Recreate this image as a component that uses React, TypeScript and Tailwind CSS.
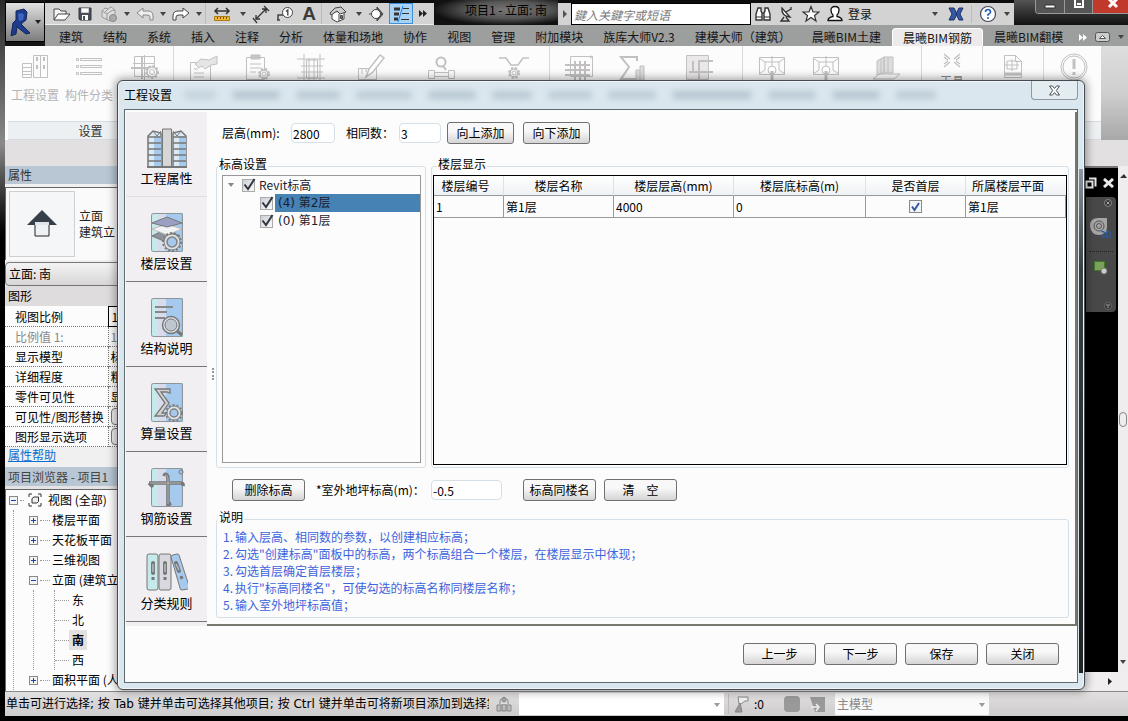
import { useState } from 'react';
import type { ReactNode } from 'react';

type IconProps = { children: ReactNode; w?: number; h?: number; box?: string; className?: string };

const Svg = ({ children, w = 20, h = 20, box, className = '' }: IconProps) => (
  <svg
    width={w}
    height={h}
    viewBox={box ?? `0 0 ${w} ${h}`}
    fill="none"
    stroke="currentColor"
    aria-hidden="true"
    className={`shrink-0 ${className}`}
  >
    {children}
  </svg>
);

const Caret = ({ className = 'text-[#444]' }: { className?: string }) => (
  <Svg w={6} h={4} className={className}>
    <path d="M0 0h6L3 4z" fill="currentColor" stroke="none" />
  </Svg>
);

/* ---------- Quick access toolbar ---------- */

const OpenIcon = () => (
  <Svg>
    <path d="M3 16V5h5l2 2h5v3" fill="#f4f4f4" stroke="#444" />
    <path d="M3 16l4-6h12l-5 6z" fill="#fff" stroke="#444" />
  </Svg>
);
const SaveIcon = () => (
  <Svg>
    <path d="M4 4h12v12H5l-1-1z" fill="#4a4f58" stroke="#333a44" />
    <path d="M6.500 4.500h7v4h-7z" fill="#fff" stroke="#ccc" />
    <path d="M7 11h6v5H7z" fill="#fff" stroke="none" />
    <path d="M8 12h2v4H8z" fill="#4a4f58" stroke="none" />
  </Svg>
);
const SyncIcon = () => (
  <Svg className="text-[#999]">
    <path d="M3 7l3-3 3 1 3-2 4 3v7l-5 4-8-4z" fill="#ddd" />
    <path d="M3 7l5 3 4-3 4-1M8 10v6M9 5L6 8" />
    <circle cx="14" cy="14" r="3.500" fill="#aaa" stroke="#888" />
  </Svg>
);
const UndoIcon = () => (
  <Svg className="text-[#888]">
    <path d="M2 9l6-5v3h5q5 0 5 5v4h-3v-3q0-2-3-2H8v3z" fill="#eee" />
  </Svg>
);
const RedoIcon = () => (
  <Svg className="text-[#444]">
    <path d="M18 9l-6-5v3H7q-5 0-5 5v4h3v-3q0-2 3-2h4v3z" fill="#fff" />
  </Svg>
);
const MeasureIcon = () => (
  <Svg>
    <path d="M3 7h14M6 4L3 7l3 3M14 4l3 3-3 3" stroke="#333" strokeWidth="1.500" />
    <path d="M2.500 12.500h15v4h-15z" fill="#f0b93a" stroke="#b07a10" />
    <path d="M5.500 13v2M8.500 13v2M11.500 13v2M14.500 13v2" stroke="#7a5200" />
  </Svg>
);
const AlignIcon = () => (
  <Svg className="text-[#333]">
    <path d="M5 15L15 5M5 11v4h4M11 5h4v4M2 14l4 5M13 2l5 5" strokeWidth="1.300" />
  </Svg>
);
const TagIcon = () => (
  <Svg className="text-[#444]">
    <path d="M3 16v-5h5M2 16h3" strokeWidth="1.500" />
    <circle cx="12.500" cy="8.500" r="5" fill="#fff" />
    <path d="M11 7.500L12.800 6v5.500" strokeWidth="1.400" />
  </Svg>
);
const LetterIcon = () => (
  <span className="font-['Liberation_Sans'] text-[19px] leading-5 font-bold text-[#3a3a3a]">A</span>
);
const HouseIcon = () => (
  <Svg className="text-[#444]">
    <path d="M4 9v6l5 3 7-3V9" fill="#fff" />
    <path d="M2 9l5-5 6-1 5 5-6 2-3-3-6 4z" fill="#ccc" />
    <path d="M11 10v7" />
    <path d="M12.500 11.500h2v3h-2z" fill="#777" />
  </Svg>
);
const SectionIcon = () => (
  <Svg className="text-[#444]">
    <path d="M10 3l6 7-6 7z" fill="#555" />
    <circle cx="9" cy="10" r="4.500" fill="#fff" />
    <path d="M2 10h2" />
  </Svg>
);
const ThinLinesIcon = () => (
  <Svg className="text-[#333]">
    <path d="M3 5h6M3 10h5M3 15h4" strokeWidth="3" />
    <path d="M12 4.500h6M11 9.500h7M10 15.500h8" />
    <path d="M12 2L7 18" stroke="#1d7fe0" />
  </Svg>
);

const DoubleArrow = ({ className = 'text-[#222]' }: { className?: string }) => (
  <Svg w={8} h={7} className={className}>
    <path d="M0 0l4 3.500L0 7zM4 0l4 3.500L4 7z" fill="currentColor" stroke="none" />
  </Svg>
);

const quickTools: { name: string; width: string; icon: ReactNode }[] = [
  { name: '打开', width: 'w-6', icon: <OpenIcon /> },
  { name: '保存', width: 'w-6', icon: <SaveIcon /> },
  { name: '同步', width: 'w-6', icon: <SyncIcon /> },
  { name: '同步选项', width: 'w-3', icon: <Caret /> },
  { name: '放弃', width: 'w-6', icon: <UndoIcon /> },
  { name: '放弃列表', width: 'w-3', icon: <Caret /> },
  { name: '重做', width: 'w-6', icon: <RedoIcon /> },
  { name: '重做列表', width: 'w-3', icon: <Caret /> },
  { name: '测量', width: 'w-8 border-l border-[#bbb]', icon: <MeasureIcon /> },
  { name: '测量选项', width: 'w-3', icon: <Caret /> },
  { name: '对齐标注', width: 'w-6', icon: <AlignIcon /> },
  { name: '按类别标记', width: 'w-6', icon: <TagIcon /> },
  { name: '文字', width: 'w-6', icon: <LetterIcon /> },
  { name: '三维视图', width: 'w-8 border-l border-[#bbb]', icon: <HouseIcon /> },
  { name: '三维选项', width: 'w-3', icon: <Caret /> },
  { name: '剖面', width: 'w-6', icon: <SectionIcon /> },
  { name: '细线', width: 'w-6 border border-[#3d8fd8] bg-[#a9d3f5]', icon: <ThinLinesIcon /> },
  { name: '更多', width: 'w-5', icon: <DoubleArrow /> },
];

const QuickAccess = () => (
  <div className="flex h-[22px] w-[389px] shrink-0 items-stretch border-b border-[#eee] bg-[#d3d3d3] pl-1">
    {quickTools.map((t) => (
      <button key={t.name} aria-label={t.name} className={`flex items-center justify-center ${t.width}`}>
        {t.icon}
      </button>
    ))}
  </div>
);

/* ---------- Search and account bar ---------- */

const InfoCenter = () => (
  <div className="flex h-[22px] w-[456px] shrink-0 items-center bg-[#d3d3d3] text-[#333]">
    <button aria-label="展开" className="flex w-[13px] justify-center">
      <Svg w={4} h={8}><path d="M0 0l4 4-4 4z" fill="#555" stroke="none" /></Svg>
    </button>
    <input
      aria-label="搜索"
      placeholder="鍵入关鍵字或短语"
      className="h-[22px] w-[180px] shrink-0 border border-black bg-white pl-[2px] text-xs text-[#777] italic outline-none placeholder:text-[#777]"
    />
    <button aria-label="查找" className="flex w-6 justify-center">
      <Svg w={18} h={18}>
        <path d="M4 3h3v3l1 2v7H2V9zM14 3h-3v3l-1 2v7h6V9z" fill="#fff" strokeWidth="1.400" />
        <path d="M2 12h6M10 12h6M8 8h2" />
      </Svg>
    </button>
    <button aria-label="通讯中心" className="flex w-6 justify-center">
      <Svg w={18} h={18}>
        <path d="M4 3q-1 8 8 9z" fill="#fff" strokeWidth="1.400" />
        <path d="M8 7l5-3M13 2v3M6 12l-3 4h8l-3-4" strokeWidth="1.300" />
      </Svg>
    </button>
    <button aria-label="收藏夹" className="flex w-6 justify-center">
      <Svg w={18} h={18}>
        <path d="M9 1.500l2 5.500h6l-4.500 3.500L14 16l-5-3.500L4 16l1.500-5.500L1 7h6z" fill="#fff" strokeWidth="1.200" />
      </Svg>
    </button>
    <button className="flex w-[109px] items-center gap-1 pl-[3px] text-xs text-[#111]">
      <Svg w={18} h={18}>
        <path d="M2 15.500q0-3 5-4v-1.500Q5 8 5 5q0-3.500 4-3.500T13 5q0 3-2 5v1.500q5 1 5 4z" fill="#fff" strokeWidth="1.300" />
      </Svg>
      登录
    </button>
    <button aria-label="登录选项" className="flex w-[9px]"><Caret /></button>
    <button aria-label="应用程序商店" className="flex w-[30px] justify-center">
      <Svg w={16} h={14}>
        <path d="M1 1h5l3 6-3 6H1l3-6zM15 1h-4L8 7l3 6h4l-3-6z" fill="#3458a8" stroke="#1d3263" />
      </Svg>
    </button>
    <button aria-label="帮助" className="flex w-[33px] justify-center border-l border-[#bbb]">
      <svg width="18" height="18" viewBox="0 0 18 18" aria-hidden="true">
        <circle cx="9" cy="9" r="7.500" fill="#fff" stroke="#445" strokeWidth="1.200" />
        <path d="M6.500 7q0-2.500 2.500-2.500T11.500 7q0 1.500-2.500 2.500v1.300" fill="none" stroke="#2462b8" strokeWidth="1.700" />
        <circle cx="9" cy="13" r="1.100" fill="#2462b8" />
      </svg>
    </button>
    <button aria-label="帮助选项" className="flex w-[10px]"><Caret /></button>
  </div>
);

const WindowButtons = () => (
  <div className="ml-auto flex h-[14px] w-[93px] overflow-hidden rounded-bl border-b border-l border-[#999]">
    <button aria-label="最小化" className="flex w-7 items-start justify-center bg-[#555] pt-1">
      <Svg w={12} h={5}><path d="M1 1h10v3H1z" fill="#fff" stroke="#333" /></Svg>
    </button>
    <button aria-label="最大化" className="flex w-7 items-start justify-center border-l border-[#999] bg-[#555]">
      <Svg w={12} h={9}><path d="M2 0v7h8V0M4 4h4" stroke="#fff" strokeWidth="2" /></Svg>
    </button>
    <button aria-label="关闭窗口" className="flex flex-1 items-start justify-center border-l border-[#999] bg-[#c0392b]">
      <Svg w={12} h={9} box="0 3 12 9" className="ml-1"><path d="M2 2l8 8M10 2l-8 8" stroke="#fff" strokeWidth="3" /></Svg>
    </button>
  </div>
);

const ribbonTabs = [
  '建筑', '结构', '系统', '插入', '注释', '分析', '体量和场地', '协作', '视图', '管理', '附加模块',
  '族库大师V2.3', '建模大师（建筑）', '晨曦BIM土建', '晨曦BIM钢筋', '晨曦BIM翻模',
];

const tabClass = (t: string) => {
  if (t === '晨曦BIM钢筋') return 'rounded-t-sm border-x border-t border-white bg-[#eceaea] px-[10px] leading-[17px]';
  return t.includes('BIM') ? 'px-[11px] leading-[18px]' : 'px-[10px] leading-[18px]';
};

const RibbonTabs = () => (
  <nav className="flex h-[21px] items-end bg-[#9d9e9e] pl-1 text-xs text-[#151515]">
    {ribbonTabs.map((t) => (
      <button key={t} className={`h-[18px] shrink-0 whitespace-nowrap ${tabClass(t)}`}>
        {t}
      </button>
    ))}
    <div className="ml-auto flex h-[18px] items-center gap-2 pr-1">
      <DoubleArrow className="text-white" />
      <Svg w={15} h={10}>
        <rect x="0.500" y="0.500" width="14" height="9" rx="2" fill="#ccc" stroke="#555" />
        <path d="M4.500 6.500h6l-3-3z" fill="#fff" stroke="#555" />
      </Svg>
      <Caret />
    </div>
  </nav>
);

/* ---------- Ribbon panels ---------- */

const Gear = ({ x, y, r }: { x: number; y: number; r: number }) => (
  <>
    <circle cx={x} cy={y} r={r} fill="#fff" strokeWidth="1.500" />
    <circle cx={x} cy={y} r={r + 1} strokeWidth="2" strokeDasharray="2 2" />
    <circle cx={x} cy={y} r={r / 2} />
  </>
);

const R = ({ children }: { children: ReactNode }) => (
  <Svg w={30} h={28} className="text-[#c2c0c1]">{children}</Svg>
);

const BuildingGlyph = () => (
  <R>
    <path d="M2.500 10.500h9v14h-9zM13.500 2.500h14v22h-14zM20.500 3v21M2 14.500h9M2 18.500h9M2 21.500h9" />
    <path d="M17 4v4M24 4v4M17 12v4M24 12v4" strokeWidth="2" />
  </R>
);
const ListGlyph = () => (
  <R><path d="M2.500 5.500h2v2h-2zM6.500 5.500h21v2h-21zM2.500 12.500h2v2h-2zM6.500 12.500h21v2h-21zM2.500 19.500h2v2h-2zM6.500 19.500h21v2h-21z" /></R>
);
const ColumnGearGlyph = () => (
  <R>
    <path d="M4.500 3.500h20v20h-20zM14.500 2v25M3 10.500h22" /><path d="M1 15h22M12 4v22" strokeWidth="2" />
    <Gear x={22} y={19} r={5} />
  </R>
);
const HandDocGlyph = () => (
  <R>
    <path d="M2.500 9.500h20v18h-20zM6 16h4M6 20h10M6 24h10" />
    <path d="M7 11l6-5 8 1 8-4v8l-6 1-6 4-3-3-3 2z" fill="#e5e5e5" />
  </R>
);
const ClipboardGlyph = () => (
  <R>
    <path d="M4.500 4.500h18v22h-18zM8 11h11M8 15h11M8 19h6" />
    <path d="M9 2h9v4H9z" fill="#c5c5c5" /><Gear x={22} y={21} r={4} />
  </R>
);
const GridGlyph = () => (
  <R><path d="M8 1v26M13 5v22M18 5v22M24 1v26M1 6h28M5 13h22M5 19h22M1 25h28" /><path d="M10.500 7h11v18h-11z" /></R>
);
const PencilGlyph = () => (
  <R>
    <path d="M2.500 15.500h18v11h-18zM6 16v5M10 16v3M14 16v5" />
    <path d="M10 24l3-8L24 2l4 3-11 14z" fill="#fff" strokeWidth="1.500" />
  </R>
);
const LensBeamGlyph = () => (
  <R>
    <path d="M2.500 17.500h6v8h-6zM22.500 17.500h6v8h-6zM9 19.500h13M9 23.500h13" />
    <circle cx="15" cy="9" r="4.500" strokeWidth="2" /><path d="M17 13l3 4" strokeWidth="2" />
  </R>
);
const TrenchGlyph = () => (
  <R><path d="M0 5h7l5 7h7l5-7h6" strokeWidth="1.500" /><Gear x={15} y={20} r={4} /></R>
);
const RebarGlyph = () => (
  <R>
    <path d="M6.500 3.500h22v20h-22z" /><path d="M11 8v20M16 8v20M21 8v20M1 12h25M1 17h25M1 22h25" strokeWidth="2" />
    <circle cx="27" cy="4" r="1" />
  </R>
);
const SigmaGlyph = () => (
  <R><path d="M19 8V4H3l8 10-8 12h16v-5" strokeWidth="2" /><path d="M18 27V17h4v-4h4v14zM22 17v10" fill="#ddd" /></R>
);
const StirrupGlyph = () => (
  <R><path d="M1.500 2.500h22v24h-22z" fill="#ebe8e9" /><path d="M28 8H14v18M4 19h24M8 8v11" strokeWidth="2" /></R>
);
const RoomGlyph = () => (
  <R>
    <path d="M2.500 4.500h25v17h-25zM2 5l6 4v8l-6 4M28 5l-6 4v8l6 4M8 9h14" />
    <path d="M15 3v14" /><circle cx="15" cy="17" r="4" fill="#fff" /><path d="M15 18v9" strokeWidth="3" />
  </R>
);
const WallGlyph = () => (
  <R><path d="M6 22V8l7-4v16zM13 4h9v16h-9z" fill="#ddd" /><path d="M2 26l6-5h21l-6 5zM10 6v14M17 4v16" /></R>
);
const CrossGlyph = () => (
  <R><path d="M7 1l6 5M23 1l-6 5M7 14l6-5M23 14l-6-5M7 4l4 3M23 4l-4 3M7 11l4-3M23 11l-4-3" strokeWidth="1.300" /></R>
);
const SheetGlyph = () => (
  <R><path d="M6.500 2.500h11l6 6v16h-17zM17.500 2.500v6h6M9 8h10v8H9zM14 6v12M7 12h14" /><path d="M7 21h16" strokeWidth="3" /></R>
);
const AlertGlyph = () => (
  <R><circle cx="15" cy="14" r="13" /><circle cx="15" cy="14" r="11" /><path d="M15 6v10M15 19v3" strokeWidth="3" /></R>
);

const ribbonGroups: { width: string; icon: ReactNode; label?: string }[][] = [
  [
    { width: 'w-[54px]', icon: <BuildingGlyph />, label: '工程设置' },
    { width: 'w-[54px]', icon: <ListGlyph />, label: '构件分类' },
    { width: 'w-[57px]', icon: <ColumnGearGlyph /> },
  ],
  [
    { width: 'w-[57px]', icon: <HandDocGlyph /> },
    { width: 'w-[51px]', icon: <ClipboardGlyph /> },
    { width: 'w-[57px]', icon: <GridGlyph /> },
    { width: 'w-[64px]', icon: <PencilGlyph /> },
    { width: 'w-[76px]', icon: <LensBeamGlyph /> },
    { width: 'w-[70px]', icon: <TrenchGlyph /> },
  ],
  [
    { width: 'w-[57px]', icon: <RebarGlyph /> },
    { width: 'w-[51px]', icon: <SigmaGlyph /> },
    { width: 'w-[84px]', icon: <StirrupGlyph /> },
  ],
  [
    { width: 'w-[57px]', icon: <RoomGlyph /> },
    { width: 'w-[51px]', icon: <RoomGlyph /> },
    { width: 'w-[70px]', icon: <WallGlyph /> },
  ],
  [{ width: 'w-[60px]', icon: <CrossGlyph />, label: '工具' }],
  [{ width: 'w-[60px]', icon: <SheetGlyph /> }],
  [{ width: 'w-[60px]', icon: <AlertGlyph /> }],
];

const Ribbon = () => (
  <div className="flex h-[94px] shrink-0 bg-[#fcfcfc]">
    <div className="flex min-w-0 flex-1 pl-[3px]">
      {ribbonGroups.map((group, i) => (
        <div key={i} className="flex shrink-0 flex-col border-r border-[#dcd8da]">
          <div className="flex h-[75px] pt-[7px]">
            {group.map((item, j) => (
              <button key={j} aria-label={item.label ?? '工具按钮'} className={`flex flex-col items-center text-xs text-[#b5b3b4] ${item.width}`}>
                {item.icon}
                {item.label && (
                  <span className={item.label === '工具' ? '-mt-2 leading-4 whitespace-nowrap text-[#888]' : 'mt-1 leading-5 whitespace-nowrap'}>
                    {item.label}
                  </span>
                )}
              </button>
            ))}
          </div>
          <div className="h-[19px] border-y border-[#d5dbe0] bg-[#edf0f2] text-center text-xs leading-[17px] text-[#333]">
            {i === 0 ? '设置' : ''}
          </div>
        </div>
      ))}
    </div>
    <div className="w-[27px] bg-linear-to-b from-[#dedede] via-[#cfcfcf] to-[#a8a8a8]" />
  </div>
);

/* ---------- Left palettes ---------- */

const properties = [
  { name: '视图比例', value: '1' },
  { name: '比例值 1:', value: '1', muted: true },
  { name: '显示模型', value: '标' },
  { name: '详细程度', value: '粗' },
  { name: '零件可见性', value: '显' },
  { name: '可见性/图形替换', value: '' },
  { name: '图形显示选项', value: '' },
];

const PropertiesPalette = () => (
  <section className="flex shrink-0 flex-col bg-[#f1f0f0] pb-1 text-xs text-black">
    <h2 className="h-[18px] shrink-0 bg-[#b9c7d5] pl-[3px] leading-[18px] text-[#333]">属性</h2>
    <div className="mt-[3px] flex h-[73px] shrink-0 items-center border-t border-l border-[#666] bg-[#fafafa] pl-[3px]">
      <div className="flex h-[66px] w-[66px] items-center justify-center border border-[#cfcfcf] bg-[#f5f6f7]">
        <Svg w={30} h={28}>
          <path d="M8 10h14v16H8z" fill="#eef1f4" stroke="#222" />
          <path d="M15 0l15 15H0z" fill="#36404a" stroke="none" />
          <path d="M8 12h14v3H8z" fill="#dfe5ea" stroke="none" />
        </Svg>
      </div>
      <p className="pl-[4px] leading-4 whitespace-nowrap text-[#222]">立面<br />建筑立</p>
    </div>
    <button className="mt-[2px] h-6 shrink-0 rounded-sm border border-[#777] bg-linear-to-b from-[#f4f4f4] to-[#d8d6d6] pl-[3px] text-left">
      立面: 南
    </button>
    <h3 className="h-5 shrink-0 bg-[#dedcdc] pl-[3px] leading-5">图形</h3>
    <table className="w-full table-fixed border-collapse bg-[#fcfcfc]">
      <tbody>
        {properties.map((p) => (
          <tr key={p.name} className={`h-[20px] border-b border-dotted border-[#777] ${p.muted ? 'text-[#888]' : ''}`}>
            <td className="w-[103px] border-r border-dotted border-[#777] pl-[10px] leading-[19px] whitespace-nowrap">{p.name}</td>
            <td className={p.name === '视图比例' ? 'border border-solid border-black pl-[3px] leading-[18px]' : 'pl-[2px] leading-[19px]'}>
              {p.value || <span className="block h-[17px] rounded-sm border border-[#777] bg-[#eee]" />}
            </td>
          </tr>
        ))}
      </tbody>
    </table>
    <a href="#help" className="pl-[3px] leading-4 text-[#0a6fd0] underline">属性帮助</a>
  </section>
);

const Expander = ({ open }: { open?: boolean }) => (
  <Svg w={9} h={9}>
    <rect x="0.500" y="0.500" width="8" height="8" fill="#f4f4f4" stroke="#888" />
    <path d={open ? 'M2 4.500h5' : 'M2 4.500h5M4.500 2v5'} stroke="#1d3fae" />
  </Svg>
);

const Dots = () => <span className="w-[10px] shrink-0 border-t border-dotted border-[#999]" />;

const ProjectBrowser = () => (
  <section className="flex min-h-0 flex-1 flex-col text-xs text-black">
    <h2 className="h-[19px] shrink-0 bg-[#b9c7d5] pl-[3px] leading-[19px] text-[#444]">项目浏览器 - 项目1</h2>
    <div className="mt-[3px] min-h-0 flex-1 overflow-hidden border-t border-l border-[#666] bg-[#fcfcfc] pl-[3px] whitespace-nowrap">
      <div className="flex h-5 items-center gap-[2px]">
        <Expander open />
        <span className="w-1 border-t border-dotted border-[#999]" />
        <Svg w={14} h={14} className="mr-1 ml-[2px] text-[#333]">
          <path d="M1 4V1h3M10 1h3v3M13 10v3h-3M4 13H1v-3" />
          <path d="M4 5.500L6 4h4.500v4.500L9 10H4z" fill="#eee" />
        </Svg>
        视图 (全部)
      </div>
      <ul className="ml-1 border-l border-dotted border-[#999] pl-[15px]">
        {['楼层平面', '天花板平面', '三维视图'].map((t) => (
          <li key={t} className="flex h-5 items-center gap-[2px]">
            <Expander /><Dots />{t}
          </li>
        ))}
        <li>
          <div className="flex h-5 items-center gap-[2px]"><Expander open /><Dots />立面 (建筑立</div>
          <ul className="ml-1 border-l border-dotted border-[#999]">
            {['东', '北', '南', '西'].map((t) => (
              <li key={t} className="ml-5 flex h-5 items-center border-l border-dotted border-[#999]">
                <span className="w-[14px] border-t border-dotted border-[#999]" />
                <span className={t === '南' ? 'bg-[#e3e0e1] px-[3px] leading-5 font-bold' : 'px-[3px]'}>{t}</span>
              </li>
            ))}
          </ul>
        </li>
        <li className="flex h-5 items-center gap-[2px]"><Expander /><Dots />面积平面 (人</li>
      </ul>
    </div>
  </section>
);

/* ---------- Drawing area to the right ---------- */

const Viewport = () => (
  <div className="flex min-w-0 flex-1 flex-col">
    <div className="flex min-h-0 flex-1">
      <div className="flex flex-1 flex-col items-end border-t-2 border-[#777] bg-black">
        <div className="flex h-[29px] items-center gap-[6px] pr-1 text-[#e8e8e8]">
          <Svg w={12} h={12}><path d="M4 1.500h6.500v8" strokeWidth="2" /><path d="M1.500 4.500h6v6h-6z" strokeWidth="2" /></Svg>
          <Svg w={11} h={10}><path d="M1 1l9 8M10 1L1 9" strokeWidth="3" /></Svg>
        </div>
        <div className="mr-[2px] flex h-[115px] w-[30px] flex-col items-center rounded-r bg-[#484848] text-[#aaa]">
          <Svg w={8} h={8} className="mt-[2px] mr-1 self-end"><circle cx="4" cy="4" r="3.500" fill="#333" stroke="#888" /><path d="M2.500 2.500l3 3M5.500 2.500l-3 3" /></Svg>
          <span className="relative mt-[10px] h-[22px] w-[22px]">
            <Svg w={22} h={22}>
              <path d="M0 9q0-8 8-8h9v9q0 8-8 8T0 9z" fill="#a5a5a5" stroke="none" />
              <circle cx="9" cy="9" r="5" stroke="#555" /><circle cx="9" cy="9" r="2.500" stroke="#555" />
            </Svg>
            <span className="absolute right-0 bottom-0 text-[9px] leading-2 font-bold text-[#2c5c9c]">3D</span>
          </span>
          <span className="mt-[12px] w-6 border-t border-dotted border-[#222]" />
          <Svg w={16} h={16} className="mt-2"><path d="M1.500 1.500h10v9h-10z" fill="#7ba15c" stroke="#3e7a22" /><circle cx="11" cy="11" r="3" fill="#ccc" stroke="#777" /></Svg>
          <Svg w={8} h={8} className="mt-auto mr-1 mb-[2px] self-end"><circle cx="4" cy="4" r="3.500" fill="#333" stroke="#666" /><path d="M2 3h4M3 5h2" /></Svg>
        </div>
      </div>
      <div className="flex w-[10px] flex-col items-center justify-between bg-[#efeded] py-2 text-[#333]">
        <Svg w={7} h={4}><path d="M0 4h7L4 0z" fill="currentColor" stroke="none" /></Svg>
        <span className="h-[15px] w-2 rounded-sm border border-[#888] bg-[#eee]" />
        <Caret />
      </div>
    </div>
    <div className="flex h-[19px] items-center justify-end bg-[#f0eeee] pr-4">
      <Svg w={4} h={7}><path d="M0 0l4 3.500L0 7z" fill="#222" stroke="none" /></Svg>
    </div>
  </div>
);

const StatusBar = () => (
  <footer className="flex h-[25px] shrink-0 items-center border-t border-[#888] bg-linear-to-b from-[#e2e0e1] to-[#cdcbcc] text-xs text-black">
    <p className="w-[484px] shrink-0 overflow-hidden pl-px font-[DejaVu_Sans,Noto_Sans_CJK_SC,sans-serif] leading-5 whitespace-nowrap">
      单击可进行选择; 按 Tab 键并单击可选择其他项目; 按 Ctrl 键并单击可将新项目添加到选择集
    </p>
    <Svg w={18} h={18} className="mx-[6px] text-[#888]">
      <path d="M2 16v-6h4v6zM7 16V9h4v7zM12 16v-6h4v6z" fill="#bbb" />
      <path d="M5 9V5l4-3 4 3v4" fill="#ddd" /><circle cx="9" cy="5" r="2" fill="#aaa" />
    </Svg>
    <span className="relative h-[22px] w-[205px] shrink-0 bg-white">
      <select aria-label="工作集" className="h-full w-full appearance-none px-1 outline-none" defaultValue="">
        <option value="" />
      </select>
      <span className="pointer-events-none absolute top-[10px] right-1"><Caret className="text-[#999]" /></span>
    </span>
    <span className="ml-1 flex h-5 w-[50px] shrink-0 items-center gap-[3px] border-l border-[#bbb] pl-1">
      <Svg w={18} h={18} className="text-[#888]">
        <path d="M5 2h10v4h-3l-4 3H6z" fill="#eee" /><path d="M7 8l-5 9h7l-1-5z" fill="#999" />
      </Svg>
      :0
    </span>
    <span className="ml-[6px] h-4 w-4 shrink-0 rounded-sm bg-[#999]" />
    <Svg w={17} h={17} className="mx-[9px] text-[#888]"><path d="M1 1h15v15H6z" fill="#999" stroke="none" /><path d="M2 11h8M7 8l3 3-3 4" stroke="#eee" strokeWidth="1.500" /></Svg>
    <span className="relative h-[22px] w-[154px] shrink-0 bg-[#fafafa]">
      <select aria-label="设计选项" className="h-full w-full appearance-none px-[2px] text-[#888] outline-none" defaultValue="主模型">
        <option>主模型</option>
      </select>
      <span className="pointer-events-none absolute top-[10px] right-1"><Caret className="text-[#999]" /></span>
    </span>
  </footer>
);

/* ---------- 工程设置 dialog ---------- */

const SideIcon = ({ children }: { children: ReactNode }) => (
  <Svg w={42} h={42} className="text-[#777]">{children}</Svg>
);

const Plate = () => (
  <>
    <path d="M5 1h32v39H5z" fill="#d8dcea" stroke="none" />
    <path d="M5 1h7v39H5z" fill="#c6eaec" stroke="none" />
    <path d="M20 1h15v39H20z" fill="#a5caee" stroke="none" />
    <path d="M35 1h2v39h-2z" fill="#8fd0cc" stroke="none" />
    <rect x="5.500" y="1.500" width="31" height="38" rx="2" stroke="#8f9498" />
  </>
);

const SideGear = ({ x, y, r }: { x: number; y: number; r: number }) => (
  <>
    <circle cx={x} cy={y} r={r + 2} stroke="#7c7c7c" strokeWidth="2" strokeDasharray="2 2" />
    <circle cx={x} cy={y} r={r + 1} fill="#dfe3e6" stroke="#808080" />
    <circle cx={x} cy={y} r={r - 2} fill="#a5caee" stroke="#808080" strokeWidth="1.500" />
  </>
);

const sideTabs = [
  {
    name: '工程属性',
    icon: (
      <SideIcon>
        <path d="M2 9l5-5 8 2v34H2zM40 9l-5-5-8 2v34h13z" fill="#dceaf5" strokeWidth="1.500" />
        <path d="M8 9h7v31H8zM33 9h7v31h-7z" fill="#a5caee" stroke="none" />
        <path d="M2 10h13M27 10h13M2 16h13M27 16h13M2 22h13M27 22h13M2 28h13M27 28h13M2 34h13M27 34h13" strokeWidth="1.500" />
        <path d="M2 9l5-5 4 5 4-5M40 9l-5-5-4 5-4-5" />
        <path d="M16.500 2h9v38h-9z" fill="#d6d6d6" />
        <path d="M1 40h40" strokeWidth="2" />
      </SideIcon>
    ),
  },
  {
    name: '楼层设置',
    icon: (
      <SideIcon>
        <Plate />
        <path d="M6 24l12-6 16 6-14 6z" fill="#8d929b" />
        <path d="M6 17l15-5 15 5-15 6z" fill="#f1f3f5" stroke="#bbb" />
        <path d="M6 11l15-6 15 6-15 4z" fill="#9c9fc4" />
        <SideGear x={26} y={30} r={7} />
      </SideIcon>
    ),
  },
  {
    name: '结构说明',
    icon: (
      <SideIcon>
        <Plate />
        <path d="M9 10h18M9 15h12M9 21h10" stroke="#888" strokeWidth="2" />
        <circle cx="25" cy="28" r="8.500" fill="#dfe3e6" strokeWidth="1.500" /><circle cx="25" cy="28" r="6" fill="#bfc6cd" />
        <path d="M31 34l5 4" strokeWidth="3" />
      </SideIcon>
    ),
  },
  {
    name: '算量设置',
    icon: (
      <SideIcon>
        <Plate />
        <path d="M24 11V7H9l10 14L9 34h9l3-3h-5l7-10-8-11h6z" fill="#d2d2d4" strokeWidth="1.300" />
        <SideGear x={28} y={31} r={6} />
      </SideIcon>
    ),
  },
  {
    name: '钢筋设置',
    icon: (
      <SideIcon>
        <Plate />
        <path d="M18 9q1-3 3-1 1 1 1 4v27M22 38l3-2M3 16h31q4 0 3 3M3 16l4 4" stroke="#777" strokeWidth="3.500" />
        <path d="M19 8q2-1 3 3v26M4 16h31" stroke="#b5b5b5" />
        <circle cx="35" cy="5" r="2" />
      </SideIcon>
    ),
  },
  {
    name: '分类规则',
    icon: (
      <SideIcon>
        <rect x="1" y="2" width="11" height="36" rx="2" fill="#c6eaec" />
        <rect x="13" y="2" width="12" height="36" rx="2" fill="#d8d8de" />
        <path d="M26 5q0-2 2-2l4-1q2 0 2 1l10 31q1 2-1 3l-6 1q-2 0-2-2z" fill="#a5caee" transform="translate(-1 0)" />
        <path d="M7 11v10M19 11v10M30 11l3 8" strokeWidth="4" strokeLinecap="round" />
        <path d="M7 12v8M19 12v8M30 12l3 6" stroke="#b9bcc2" strokeWidth="1.500" />
        <path d="M7 25v3M19 25v3M35 24l1 3" strokeWidth="3" />
      </SideIcon>
    ),
  },
];

const SideTabs = ({ active, onSelect }: { active: string; onSelect: (name: string) => void }) => (
  <nav className="flex w-[81px] shrink-0 flex-col bg-[#f1eff1]">
    {sideTabs.map((tab) => (
      <button
        key={tab.name}
        onClick={() => onSelect(tab.name)}
        className={`flex h-[85px] flex-col items-center border-b pt-[15px] text-[13px] text-black ${
          tab.name === active ? 'border-[#e2dfe0]' : 'border-[#777]'
        }`}
      >
        {tab.icon}
        <span className="leading-[18px]">{tab.name}</span>
      </button>
    ))}
  </nav>
);

const Button = ({ children, wide = true }: { children: ReactNode; wide?: boolean }) => (
  <button
    className={`h-[22px] shrink-0 rounded-[3px] border border-[#707070] bg-linear-to-b from-[#f8f8f8] from-40% to-[#d6d4d4] text-xs leading-5 whitespace-pre text-black ${
      wide ? 'w-[73px]' : 'w-[67px]'
    }`}
  >
    {children}
  </button>
);

const fieldClass = 'h-5 rounded-sm border border-[#d5e0e6] bg-white pl-px text-xs text-black outline-none';
const groupClass = 'rounded-[3px] border border-[#d5dfe5]';
const legendClass = 'ml-px px-px pb-1 text-xs leading-[14px]';

const TreeCheck = ({ id, checked, onChange }: { id: string; checked: boolean; onChange: () => void }) => (
  <span className="relative h-[13px] w-[13px] shrink-0">
    <input
      id={id}
      type="checkbox"
      checked={checked}
      onChange={onChange}
      className="block h-[13px] w-[13px] appearance-none border border-[#aaa] bg-linear-to-br from-[#cbd0d6] to-[#fafafa]"
    />
    {checked && (
      <Svg w={14} h={14} className="pointer-events-none absolute -top-px left-0">
        <path d="M2.500 6.500L6 11 12.500 1" stroke="#333640" strokeWidth="2" />
      </Svg>
    )}
  </span>
);

const LevelTree = () => {
  const [checked, setChecked] = useState<Record<string, boolean>>({ root: true, l2: true, l1: true });
  const toggle = (key: string) => setChecked((prev) => ({ ...prev, [key]: !prev[key] }));

  return (
    <div className="h-full border border-[#999] bg-[#fcfcfc] text-xs text-[#1c1c30]">
      <div className="flex h-[18px] items-center pl-[5px]">
        <Caret className="mr-2 text-[#888]" />
        <TreeCheck id="root" checked={checked.root} onChange={() => toggle('root')} />
        <label htmlFor="root" className="pl-1 leading-[18px]">Revit标高</label>
      </div>
      {[
        { id: 'l2', name: '(4) 第2层', selected: true },
        { id: 'l1', name: '(0) 第1层', selected: false },
      ].map((row) => (
        <div key={row.id} className="flex h-[18px] items-center pl-[37px]">
          <TreeCheck id={row.id} checked={checked[row.id]} onChange={() => toggle(row.id)} />
          <label
            htmlFor={row.id}
            className={`ml-[2px] flex-1 pl-[3px] font-[DejaVu_Sans,Noto_Sans_CJK_SC,sans-serif] leading-[18px] ${row.selected ? 'bg-[#4682b4]' : ''}`}
          >
            {row.name}
          </label>
        </div>
      ))}
    </div>
  );
};

const columns = [
  { title: '楼层编号', width: 'w-[70px]' },
  { title: '楼层名称', width: 'w-[110px]' },
  { title: '楼层层高(mm)', width: 'w-[120px]' },
  { title: '楼层底标高(m)', width: 'w-[132px]' },
  { title: '是否首层', width: 'w-[100px]' },
  { title: '所属楼层平面', width: '' },
];

const FloorTable = () => {
  const [first, setFirst] = useState(true);
  const cell = 'border-r border-b border-[#999] pl-[2px]';

  return (
    <div className="h-full border border-black bg-[#fcfcfc]">
      <table className="w-full table-fixed border-separate border-spacing-0 text-xs text-black">
        <thead>
          <tr className="h-5 bg-linear-to-b from-white to-[#eef1f3]">
            {columns.map((c, i) => (
              <th
                key={c.title}
                className={`border-b border-[#999] font-normal leading-[18px] ${c.width} ${
                  i === 5 ? 'pr-4' : 'border-r border-r-[#e6dfe1]'
                } ${i === 0 ? 'pr-[6px]' : ''}`}
              >
                {c.title}
              </th>
            ))}
          </tr>
        </thead>
        <tbody>
          <tr className="h-[22px]">
            <td className={cell}>1</td>
            <td className={cell}>第1层</td>
            <td className={cell}>4000</td>
            <td className={cell}>0</td>
            <td className="border-r border-b border-[#999]">
              <span className="relative mx-auto block h-[13px] w-[13px]">
                <input
                  type="checkbox"
                  aria-label="是否首层"
                  checked={first}
                  onChange={() => setFirst(!first)}
                  className="block h-[13px] w-[13px] appearance-none border border-[#888] bg-[#f2f4f6]"
                />
                {first && (
                  <Svg w={13} h={13} className="pointer-events-none absolute top-0 left-0">
                    <path d="M3 6.500L5.500 10 10 3" stroke="#3a56a0" strokeWidth="2" />
                  </Svg>
                )}
              </span>
            </td>
            <td className={cell}>第1层</td>
          </tr>
        </tbody>
      </table>
    </div>
  );
};

const notes = [
  '输入层高、相同数的参数，以创建相应标高；',
  '勾选"创建标高"面板中的标高，两个标高组合一个楼层，在楼层显示中体现；',
  '勾选首层确定首层楼层；',
  '执行"标高同楼名"，可使勾选的标高名称同楼层名称；',
  '输入室外地坪标高值；',
];

const SettingsPane = () => (
  <div className="relative flex min-w-0 flex-1 flex-col border-r-2 border-b-2 border-[#77776e] bg-[#fcfcfc] pt-[10px] pr-[6px] pb-[6px] pl-[9px] text-xs text-black">
    {/* splitter grip */}
    <span className="absolute top-1/2 left-[5px] h-3 border-l-2 border-dotted border-[#999]" />
    <div className="flex h-[22px] shrink-0 items-center pl-[6px]">
      <label htmlFor="height" className="w-[69px]">层高(mm):</label>
      <input id="height" defaultValue="2800" className={`w-11 ${fieldClass}`} />
      <label htmlFor="count" className="w-[64px] pl-[11px]">相同数：</label>
      <input id="count" defaultValue="3" className={`w-[42px] ${fieldClass}`} />
      <div className="flex gap-[9px] pl-[6px]">
        <Button wide={false}>向上添加</Button>
        <Button wide={false}>向下添加</Button>
      </div>
    </div>

    <div className="mt-[13px] flex min-h-0 flex-1 gap-[5px]">
      <fieldset className={`flex w-[210px] shrink-0 flex-col ${groupClass}`}>
        <legend className={legendClass}>标高设置</legend>
        <div className="h-full pr-1 pb-1 pl-[5px]"><LevelTree /></div>
      </fieldset>
      <fieldset className={`min-w-0 flex-1 ${groupClass}`}>
        <legend className="ml-[5px] px-px pb-1 text-xs leading-[14px]">楼层显示</legend>
        <div className="h-full pr-px pb-[2px] pl-px"><FloorTable /></div>
      </fieldset>
    </div>

    <div className="mt-[11px] flex h-[22px] shrink-0 items-center pl-4">
      <Button>删除标高</Button>
      <label htmlFor="ground" className="w-[126px] pl-[11px] whitespace-nowrap">*室外地坪标高(m)：</label>
      <input id="ground" defaultValue="-0.5" className={`w-[71px] ${fieldClass}`} />
      <div className="flex gap-2 pl-[21px]">
        <Button>标高同楼名</Button>
        <Button>{'清　空'}</Button>
      </div>
    </div>

    <fieldset className={`mt-[9px] h-[108px] shrink-0 ${groupClass}`}>
      <legend className={legendClass}>说明</legend>
      <ol className="pl-[6px] leading-[17px] text-[#3c64dc]">
        {notes.map((n, i) => (
          <li key={n} className="flex">
            <span className="w-3">{i + 1}.</span>
            <span>{n}</span>
          </li>
        ))}
      </ol>
    </fieldset>
  </div>
);

const SettingsDialog = () => {
  const [tab, setTab] = useState('工程属性');

  return (
    <div
      role="dialog"
      aria-label="工程设置"
      className="absolute top-20 right-[43px] bottom-[31px] left-[117px] flex flex-col rounded-md border border-[#444c52] bg-[#dbe7ee] px-[6px] pb-[6px] shadow-[0_0_8px_2px_rgba(0,0,0,0.35)] ring-1 ring-white/60 ring-inset"
    >
      {/* dark canvas showing through the right glass edge */}
      <span className="absolute top-[88px] right-px bottom-4 w-1 bg-linear-to-b from-[#8d979d] via-[#3a3f43] via-20% to-[#222]" />
      <header className="flex h-7 shrink-0 items-center">
        <h1 className="shrink-0 text-xs text-black">工程设置</h1>
        {/* smudges of the ribbon seen through the glass title bar */}
        <div className="flex min-w-0 flex-1 gap-4 px-3 blur-[3px]">
          <span className="h-2 w-8 rounded-full bg-[#c2d1db]" />
          <span className="h-2 w-12 rounded-full bg-[#b4c4cf]" />
          <span className="h-2 w-11 rounded-full bg-[#b8c8d3]" />
          <span className="h-2 w-14 rounded-full bg-[#bccbd5]" />
          <span className="h-2 w-12 rounded-full bg-[#b6c6d1]" />
          <span className="h-2 w-10 rounded-full bg-[#b8c8d3]" />
          <span className="h-2 w-11 rounded-full bg-[#bccbd5]" />
          <span className="h-2 w-12 rounded-full bg-[#bccbd5]" />
          <span className="h-2 w-20 rounded-full bg-[#b4c4cf]" />
          <span className="h-2 w-12 rounded-full bg-[#b8c8d3]" />
          <span className="h-2 w-12 rounded-full bg-[#b4c4cf]" />
          <span className="h-2 w-10 rounded-full bg-[#bccbd5]" />
        </div>
        <button aria-label="关闭对话框" className="flex h-[19px] w-[47px] shrink-0 items-center justify-center self-start rounded-b border border-t-0 border-[#8d989f] bg-[#e3ecf1]">
          <Svg w={13} h={11}>
            <path d="M1.500 1h3l2 2.500L8.500 1h3L8.300 5.500l3.200 4.500h-3l-2-2.500-2 2.500h-3l3.200-4.500z" fill="#fff" stroke="#4b5158" />
          </Svg>
        </button>
      </header>

      <div className="flex min-h-0 flex-1 flex-col border border-[#5d6a70] bg-[#fcfcfc] pt-[2px] pl-px">
        <div className="flex min-h-0 flex-1">
          <SideTabs active={tab} onSelect={setTab} />
          <SettingsPane />
        </div>
        <div className="flex h-[56px] shrink-0 justify-end gap-2 pt-[17px] pr-[18px]">
          <Button>上一步</Button>
          <Button>下一步</Button>
          <Button>保存</Button>
          <Button>关闭</Button>
        </div>
      </div>
    </div>
  );
};

export default function App() {
  return (
    <div className="relative flex h-screen flex-col overflow-hidden bg-black bg-linear-to-b from-[#2a2a2a] from-0% via-[#8a8a8a] via-20% to-black to-35% pb-[5px] pl-[5px] font-['Noto_Sans_CJK_SC',sans-serif]">
      <div className="flex h-[46px] shrink-0 bg-[#9d9e9e]">
        <div className="shrink-0 bg-[#151515] pt-[2px]">
          <button aria-label="应用程序菜单" className="flex h-10 w-10 items-center justify-center border border-black bg-linear-to-b from-[#e2e2e2] to-[#7d7d7d]">
            <Svg w={22} h={28}>
              <path d="M7 3l8-2 3 3-1 8-5 4 9 9-4 1-9-7-1 7-5 2 2-13 3-3z" fill="#1d3c8c" stroke="#13265c" />
              <path d="M9 6l4-1 2 2-1 5-4 1z" fill="#3f66bd" stroke="none" />
            </Svg>
            <Caret className="ml-1 self-center text-[#222]" />
          </button>
        </div>
        <div className="flex min-w-0 flex-1 flex-col">
          <div className="flex h-[25px] bg-linear-to-b from-[#0c0c0c] to-[#1c1c1c] pt-[3px]">
            <QuickAccess />
            <div className="-mt-[3px] flex min-w-[124px] items-start justify-center bg-[radial-gradient(ellipse_at_60%_40%,#777_0%,#555_40%,#111_72%)] pl-5 text-xs leading-5 text-black">
              项目1 - 立面: 南
            </div>
            <InfoCenter />
            <div className="-mt-[3px] flex flex-1 bg-linear-to-b from-[#555] to-[#111]"><WindowButtons /></div>
          </div>
          <RibbonTabs />
        </div>
      </div>

      <Ribbon />
      <div className="h-[26px] shrink-0 bg-[#e2e0e1]" />

      <div className="flex min-h-0 flex-1 bg-[#e4e2e3]">
        <aside className="flex w-[140px] shrink-0 flex-col">
          <PropertiesPalette />
          <ProjectBrowser />
        </aside>
        <Viewport />
      </div>

      <StatusBar />
      <SettingsDialog />
    </div>
  );
}
